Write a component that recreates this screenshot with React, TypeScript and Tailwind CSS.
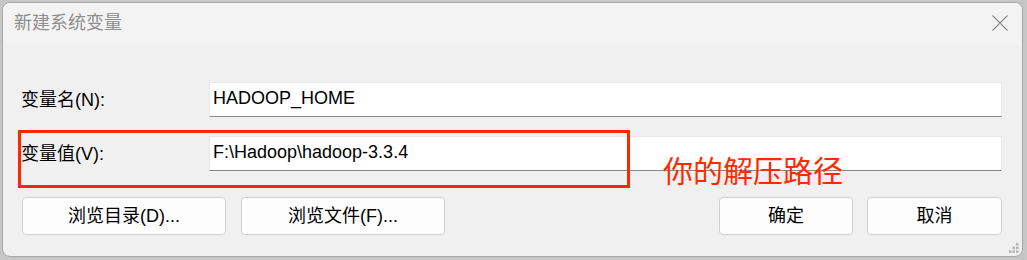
const FONT = { fontFamily: '"Liberation Sans", "Noto Sans CJK SC", sans-serif' };

function Field({ label, value }: { label: string; value: string }) {
  return (
    <div className="flex items-center">
      <div className="w-[188px] shrink-0 text-[18px] text-black leading-none">{label}</div>
      <div className="flex-1 h-[35px] bg-white border border-[#e8e8e8] border-b-[#888888] flex items-center pl-[3px] pb-[3px] text-[18px] text-black leading-none">
        {value}
      </div>
    </div>
  );
}

function Btn({ children, w }: { children: React.ReactNode; w: string }) {
  return (
    <button
      className={`${w} h-[38px] rounded-[4px] bg-[#fdfdfd] border border-[#d0d0d0] text-[18px] text-black leading-none flex items-center justify-center`}
    >
      {children}
    </button>
  );
}

export default function App() {
  return (
    <div className="w-[1027px] h-[260px] bg-[#c6c6c6] pt-[2px] pl-[2px] pr-[4px] pb-[3px]" style={FONT}>
      <div className="relative h-full rounded-[8px] overflow-hidden border border-[#a8a8a8] bg-[#f0f0f0] flex flex-col">
        {/* title bar */}
        <div className="h-[42px] bg-[#f3f3f3] flex items-center justify-between pl-[11px] pr-[14px] shrink-0">
          <span className="text-[18px] text-[#8e8e8e] leading-none pb-[2px]">新建系统变量</span>
          <svg width="16" height="16" viewBox="0 0 16 16" className="mb-[2px]">
            <path d="M0.5 0.5 L15.5 15.5 M15.5 0.5 L0.5 15.5" stroke="#8a8a8a" strokeWidth="1.1" fill="none" />
          </svg>
        </div>

        {/* fields */}
        <div className="flex flex-col gap-[19px] pt-[37px] pl-[18px] pr-[20px]">
          <Field label="变量名(N):" value="HADOOP_HOME" />
          <Field label="变量值(V):" value="F:\Hadoop\hadoop-3.3.4" />
        </div>

        {/* buttons */}
        <div className="flex items-center justify-between pt-[26px] pl-[19px] pr-[20px]">
          <div className="flex gap-[15px]">
            <Btn w="w-[204px]">浏览目录(D)...</Btn>
            <Btn w="w-[204px]">浏览文件(F)...</Btn>
          </div>
          <div className="flex gap-[14px]">
            <Btn w="w-[134px]">确定</Btn>
            <Btn w="w-[135px]">取消</Btn>
          </div>
        </div>

        {/* annotation overlay */}
        <div className="absolute left-[15px] top-[127px] w-[612px] h-[58px] border-[3px] border-[#ff2600]" />
        <div
          className="absolute left-[660px] top-[151px] text-[30px] leading-none text-[#ff2a00]"
          style={{ fontFamily: '"Noto Sans CJK SC", sans-serif' }}
        >
          你的解压路径
        </div>

        {/* resize grip */}
        <svg className="absolute right-[3px] bottom-[2px]" width="11" height="11" viewBox="0 0 11 11">
          <g fill="#b4b4b4">
            <rect x="8" y="0" width="2.5" height="2.5" />
            <rect x="4.5" y="3.7" width="2.5" height="2.5" />
            <rect x="8" y="3.7" width="2.5" height="2.5" />
            <rect x="1" y="7.4" width="2.5" height="2.5" />
            <rect x="4.5" y="7.4" width="2.5" height="2.5" />
            <rect x="8" y="7.4" width="2.5" height="2.5" />
          </g>
        </svg>
      </div>
    </div>
  );
}
